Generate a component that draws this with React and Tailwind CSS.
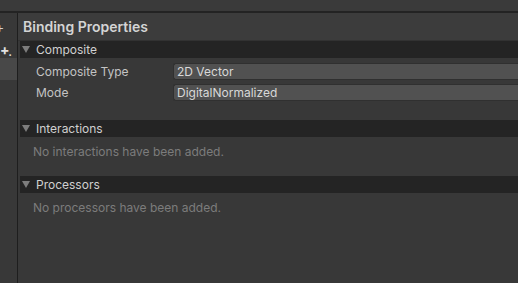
import React from "react";

const Section = ({ title, children }) => (
  <div className="flex flex-col">
    <div className="h-[17px] bg-[#242424] flex items-center text-[12px] text-[#d0d0d0] leading-none">
      <svg width="8" height="7" viewBox="0 0 8 7" className="ml-[2px] mr-[6px]">
        <polygon points="0,0 8,0 4,7" fill="#7d7d7d" />
      </svg>
      {title}
    </div>
    {children}
  </div>
);

const Field = ({ label, value }) => (
  <div className="flex items-center h-[21px]">
    <div className="w-[153px] pl-[16px] text-[12px] text-[#c4c4c4]">{label}</div>
    <div className="flex-1 h-[17px] bg-[#515151] border border-[#303030] border-r-0 rounded-l-[3px] flex items-center pl-[3px] text-[12px] text-[#d8d8d8]">
      {value}
    </div>
  </div>
);

export default function App() {
  return (
    <div
      className="w-[518px] h-[283px] bg-[#383838] flex flex-col overflow-hidden"
      style={{ fontFamily: "Inter, 'Noto Sans', sans-serif" }}
    >
      <div className="h-[13px] shrink-0 bg-[#3a3a3a] border-b-2 border-[#232323]" />
      <div className="flex flex-1">
        <div className="w-[18px] border-r border-[#1e1e1e] flex flex-col">
          <div className="h-[28px] flex items-center text-[#d0d0d0] text-[14px] leading-none -ml-[5px]">+</div>
          <div className="h-[17px] flex items-center text-[#e0e0e0] text-[14px] font-bold leading-none">
            +<span className="text-[10px] -ml-[1px] mt-[4px]">.</span>
          </div>
          <div className="h-[22px] bg-[#484848]" />
        </div>
        <div className="flex-1 flex flex-col">
          <div className="h-[28px] bg-[#3c3c3c] border-b border-[#323232] flex items-center pl-[5px] text-[14px] font-semibold text-[#d4d4d4]">
            Binding Properties
          </div>
          <div className="pl-[2px] flex flex-col">
            <Section title="Composite">
              <div className="pt-[3px] flex flex-col">
                <Field label="Composite Type" value="2D Vector" />
                <Field label="Mode" value="DigitalNormalized" />
              </div>
            </Section>
            <div className="mt-[17px]">
              <Section title="Interactions">
                <div className="h-[39px] pl-[13px] pt-[6px] text-[12px] text-[#7c7c7c]">
                  No interactions have been added.
                </div>
              </Section>
            </div>
            <Section title="Processors">
              <div className="pl-[13px] pt-[6px] text-[12px] text-[#7c7c7c]">
                No processors have been added.
              </div>
            </Section>
          </div>
        </div>
      </div>
    </div>
  );
}
